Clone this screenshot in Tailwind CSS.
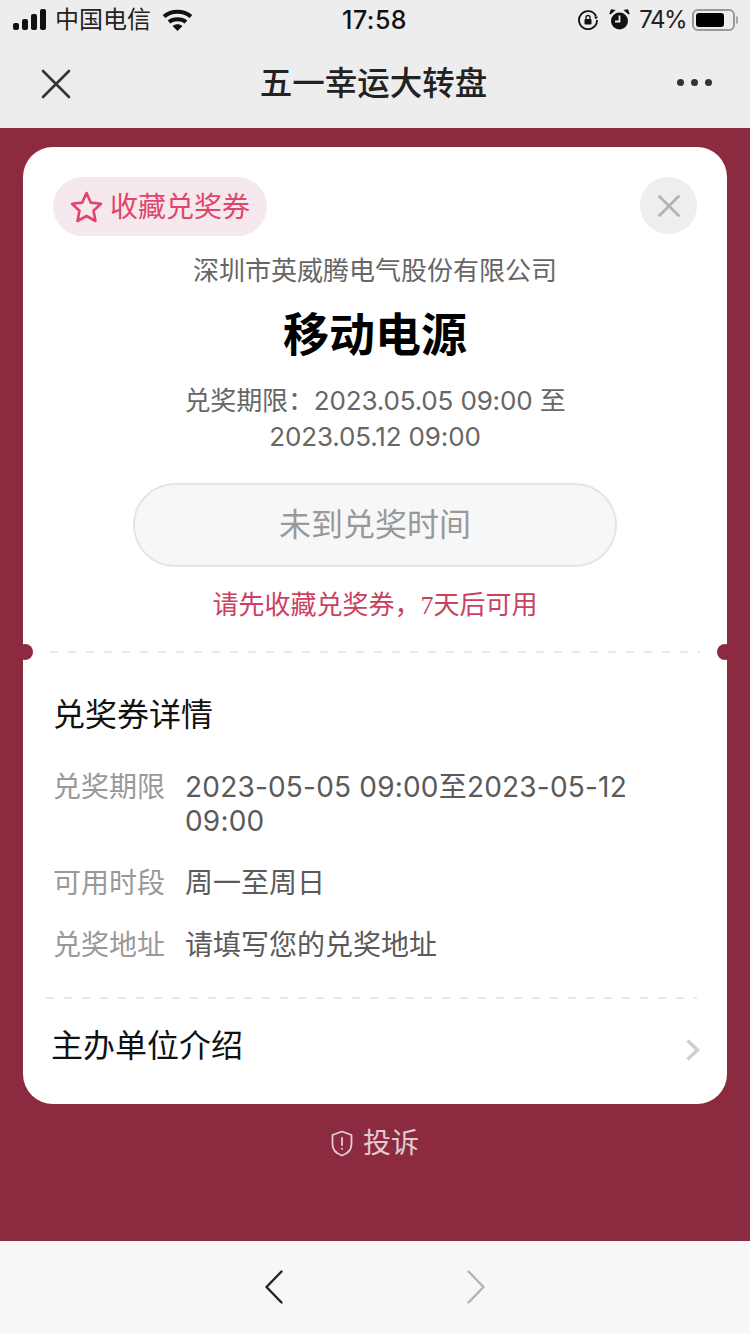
<!DOCTYPE html>
<html lang="zh-CN">
<head>
    <meta charset="UTF-8">
    <meta name="viewport" content="width=device-width, initial-scale=1.0">
    <title>五一幸运大转盘</title>
    <script src="https://cdn.jsdelivr.net/npm/@tailwindcss/browser@4"></script>
</head>
<body class="w-[750px] h-[1334px] overflow-hidden bg-[#8c2b3f] font-['Inter','Noto_Sans_CJK_SC',sans-serif]">

<!-- status bar + nav -->
<div class="bg-[#ededed] h-[128px]">
    <div class="h-[40px] relative flex items-center justify-between pl-[13px] pr-[12px] text-[24px] text-[#222]">
        <div class="flex items-center">
            <svg width="34" height="22" viewBox="0 0 34 22" fill="#111"><rect x="0" y="14" width="6" height="7" rx="2"/><rect x="9" y="10" width="6" height="11" rx="2"/><rect x="18" y="5" width="6" height="16" rx="2"/><rect x="27" y="0" width="6" height="21" rx="2"/></svg>
            <span class="ml-[8px] leading-none">中国电信</span>
            <svg class="ml-[11px]" width="31" height="22" viewBox="0 0 31 22" fill="none" stroke="#111" stroke-width="4"><path d="M2 7.500C9.500 1 21.500 1 29 7.500"/><path d="M7 13C11.500 9.200 19.500 9.200 24 13"/><path d="M15.500 22L10.500 17C13.500 14.800 17.500 14.800 20.500 17Z" fill="#111" stroke="none"/></svg>
        </div>
        <span class="absolute left-[342px] top-[3px] text-[25px] tracking-[0.5px] font-medium leading-[34px] text-[#111]">17:58</span>
        <div class="flex items-center">
            <svg width="22" height="22" viewBox="0 0 22 22" fill="none" stroke="#111" stroke-width="1.800"><path d="M19 7A9 9 0 1 0 20 11"/><path d="M17 7.500h4l-2 3z" fill="#111" stroke="none"/><rect x="7.500" y="10" width="7" height="5.500" rx="1" fill="#111" stroke="none"/><path d="M9 10V8.500a2 2 0 0 1 4 0V10" stroke-width="1.300"/></svg>
            <svg class="ml-[10px]" width="21" height="22" viewBox="0 0 21 22" fill="#111"><circle cx="10.500" cy="12" r="8.500"/><path d="M1 5L5 1.500L2.500 1ZM20 5L16 1.500L18.500 1Z" stroke="#111" stroke-width="1.500"/><path d="M10.500 6.500V12.500H6" fill="none" stroke="#ededed" stroke-width="1.800"/></svg>
            <span class="ml-[9px] leading-none tracking-[-1.500px]">74%</span>
            <div class="ml-[6px] flex items-center">
                <div class="w-[43px] h-[22px] rounded-[6px] border-2 border-[#999] p-[2px]"><div class="h-full w-[28px] rounded-[3px] bg-black"></div></div>
                <div class="ml-[1px] w-[2px] h-[8px] rounded-r-full bg-[#aaa]"></div>
            </div>
        </div>
    </div>
    <div class="h-[88px] flex items-center justify-between pl-[40px] pr-[38px]">
        <svg class="mb-[1px]" width="32" height="32" viewBox="0 0 32 32" stroke="#333" stroke-width="2.600" stroke-linecap="round"><path d="M3 3L29 29M29 3L3 29"/></svg>
        <span class="mr-[2px] text-[32.500px] font-medium text-[#222] leading-none">五一幸运大转盘</span>
        <div class="flex gap-[7px] mb-[3px]">
            <span class="w-[7px] h-[7px] rounded-full bg-[#333]"></span>
            <span class="w-[7px] h-[7px] rounded-full bg-[#333]"></span>
            <span class="w-[7px] h-[7px] rounded-full bg-[#333]"></span>
        </div>
    </div>
</div>

<!-- page body -->
<div class="h-[1113px] pt-[19px] flex flex-col">
    <div class="relative mx-[23px] h-[957px] rounded-[30px] bg-white">
        <span class="absolute left-[-6px] top-[497px] w-[16px] h-[16px] rounded-full bg-[#8c2b3f]"></span>
        <span class="absolute right-[-6px] top-[497px] w-[16px] h-[16px] rounded-full bg-[#8c2b3f]"></span>

        <div class="px-[30px] pt-[30px]">
            <div class="flex items-start justify-between">
                <div class="h-[59px] w-[214px] rounded-full bg-[#f6e9ed] flex items-center pl-[17px] text-[#e0456b]">
                    <svg width="33" height="32" viewBox="0 0 33 32" fill="none" stroke="#e0456b" stroke-width="2.600" stroke-linejoin="round"><path d="M16.500 2L20.800 11.600L31 12.800L23.500 19.800L25.500 30L16.500 25L7.500 30L9.500 19.800L2 12.800L12.200 11.600Z"/></svg>
                    <span class="ml-[7px] text-[28px] leading-none">收藏兑奖券</span>
                </div>
                <div class="w-[57px] h-[57px] rounded-full bg-[#eeeeee] flex items-center justify-center">
                    <svg width="22" height="22" viewBox="0 0 22 22" stroke="#b3b3b3" stroke-width="2.800" stroke-linecap="round"><path d="M1.500 1.500L20.500 20.500M20.500 1.500L1.500 20.500"/></svg>
                </div>
            </div>
            <p class="mt-[17px] text-center text-[26px] leading-[36px] text-[#666]">深圳市英威腾电气股份有限公司</p>
            <h1 class="mt-[17px] text-center text-[46px] leading-[56px] font-bold text-black">移动电源</h1>
            <p class="mt-[21px] text-center text-[26px] leading-[36px] tracking-[-0.150px] text-[#666] px-[70px]">兑奖期限：2023.05.05 09:00 至 2023.05.12 09:00</p>
            <div class="mt-[28px] mx-[80px] h-[84px] rounded-full border-2 border-[#e5e5e5] bg-[#f7f7f7] flex items-center justify-center text-[32px] text-[#999]">未到兑奖时间</div>
            <p class="mt-[20px] text-center text-[26px] leading-[36px] text-[#c9415f]">请先收藏兑奖券，<span class="font-['Liberation_Serif']">7</span>天后可用</p>
        </div>

        <div class="mt-[27px] mx-[27px] h-[2px] bg-[repeating-linear-gradient(90deg,#e8e8e8_0_8px,transparent_8px_18px)]"></div>

        <div class="pl-[30px] pr-[30px] pt-[42px]">
            <h2 class="text-[32px] leading-[40px] text-[#111]">兑奖券详情</h2>
            <div class="mt-[35px] flex flex-col gap-[28px] text-[28px] leading-[34px]">
                <div class="flex">
                    <span class="w-[132px] shrink-0 text-[#999]">兑奖期限</span>
                    <span class="text-[#5a5a5a] tracking-[0.200px] break-words">2023-05-05 09:00至2023-05-12 09:00</span>
                </div>
                <div class="flex">
                    <span class="w-[132px] shrink-0 text-[#999]">可用时段</span>
                    <span class="text-[#5a5a5a]">周一至周日</span>
                </div>
                <div class="flex">
                    <span class="w-[132px] shrink-0 text-[#999]">兑奖地址</span>
                    <span class="text-[#5a5a5a]">请填写您的兑奖地址</span>
                </div>
            </div>
        </div>

        <div class="mt-[35px] ml-[23px] mr-[30px] h-[2px] bg-[repeating-linear-gradient(90deg,#e8e8e8_0_8px,transparent_8px_18px)]"></div>

        <div class="pl-[28px] pr-[27px] mt-[27px] flex items-center justify-between">
            <span class="text-[32px] leading-[40px] text-[#111]">主办单位介绍</span>
            <svg class="mt-[7px]" width="14" height="22" viewBox="0 0 14 22" fill="none" stroke="#cfcfcf" stroke-width="3.600"><path d="M1.500 1.500L11.500 11L1.500 20.500"/></svg>
        </div>
    </div>

    <div class="mt-[22px] flex items-center justify-center text-[28px] leading-[34px] text-white/75">
        <svg width="22" height="27" viewBox="0 0 22 27" fill="none" stroke="#e6cdd3" stroke-width="1.800" stroke-linejoin="round"><path d="M11 1.500L20.500 5V14C20.500 20 16 23.800 11 25.500C6 23.800 1.500 20 1.500 14V5Z"/><path d="M11 8V15" stroke-linecap="round"/><circle cx="11" cy="18.800" r="1" fill="#e6cdd3" stroke="none"/></svg>
        <span class="ml-[10px]">投诉</span>
    </div>
</div>

<!-- bottom toolbar -->
<div class="h-[93px] bg-[#f7f7f7] flex items-center justify-center gap-[184px] pb-[1px]">
    <svg width="18" height="34" viewBox="0 0 18 34" fill="none" stroke="#222" stroke-width="2.400" stroke-linecap="round" stroke-linejoin="round"><path d="M16.500 1.500L1.500 17L16.500 32.500"/></svg>
    <svg width="18" height="34" viewBox="0 0 18 34" fill="none" stroke="#b3b3b3" stroke-width="2.400" stroke-linecap="round" stroke-linejoin="round"><path d="M1.500 1.500L16.500 17L1.500 32.500"/></svg>
</div>

</body>
</html>
